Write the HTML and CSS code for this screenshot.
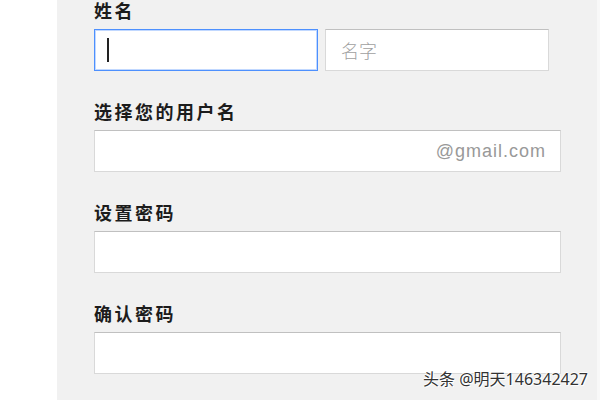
FILE: index.html
```html
<!DOCTYPE html>
<html lang="zh-CN">
<head>
<meta charset="utf-8">
<title>创建帐号</title>
<link rel="stylesheet" href="styles.css">
</head>
<body>
<div class="page">
  <div class="gutter"></div>
  <main class="panel">
    <section class="field">
      <div class="label">姓名</div>
      <div class="name-row">
        <div class="box box-focus"><span class="caret"></span></div>
        <div class="box"><span class="placeholder">名字</span></div>
      </div>
    </section>
    <section class="field">
      <div class="label">选择您的用户名</div>
      <div class="box box-suffix"><span class="suffix">@gmail.com</span></div>
    </section>
    <section class="field">
      <div class="label">设置密码</div>
      <div class="box"></div>
    </section>
    <section class="field field-last">
      <div class="label">确认密码</div>
      <div class="box"></div>
    </section>
  </main>
  <div class="edge"></div>
</div>
<div class="watermark">头条 @明天146342427</div>
</body>
</html>
```

FILE: styles.css
```css
html, body {
  margin: 0;
  padding: 0;
  background: #ffffff;
  width: 600px;
  height: 400px;
  overflow: hidden;
  font-family: "Noto Sans CJK SC", "Liberation Sans", sans-serif;
}

.page {
  display: flex;
  height: 400px;
}

.gutter {
  width: 57px;
  background: #ffffff;
}

.panel {
  width: 540px;
  box-sizing: border-box;
  padding: 0 36px 0 37px;
  background: #f1f1f1;
}

.edge {
  width: 3px;
  background: #f8f8f8;
}

.field {
  margin-bottom: 30px;
}

.field-last {
  margin-top: 1px;
}

.label {
  font-size: 18px;
  line-height: 20px;
  font-weight: 700;
  letter-spacing: 2.5px;
  color: #1c1c1c;
  margin-bottom: 9px;
}

.name-row {
  display: grid;
  grid-template-columns: 224px 224px;
  column-gap: 7px;
}

.box {
  box-sizing: border-box;
  height: 42px;
  background: #ffffff;
  border: 1px solid #d9d9d9;
  border-top-color: #c0c0c0;
  display: flex;
  align-items: center;
  padding: 0 14px 0 15px;
}

.box-focus {
  border: 1px solid #4d90fe;
  box-shadow: inset 0 0 0 1px rgba(77, 144, 254, 0.35);
  padding-left: 12px;
}

.caret {
  display: block;
  width: 2px;
  height: 24px;
  background: #222222;
}

.placeholder {
  font-size: 18px;
  font-weight: 300;
  color: #a0a0a0;
}

.box-suffix {
  justify-content: flex-end;
}

.suffix {
  font-family: "Liberation Sans", Arial, sans-serif;
  font-size: 18px;
  letter-spacing: 1px;
  color: #999999;
}

.watermark {
  position: absolute;
  right: 12px;
  top: 369px;
  font-size: 16px;
  line-height: 20px;
  color: #333333;
  text-shadow: 1px 1px 0 #ffffff, -1px 0 0 #ffffff, 0 -1px 0 #ffffff;
  font-family: "Noto Sans", "Noto Sans CJK SC", sans-serif;
}
```
